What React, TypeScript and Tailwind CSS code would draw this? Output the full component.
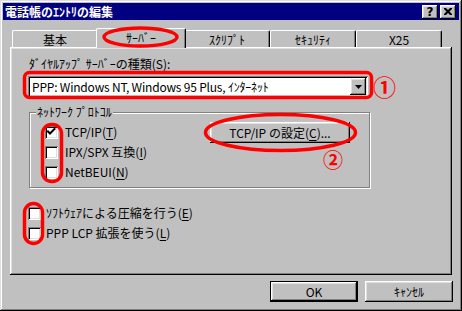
import React from "react";

const raised =
  "shadow-[inset_-1px_-1px_#000,inset_1px_1px_#fff,inset_-2px_-2px_#808080,inset_2px_2px_#dfdfdf]";
const sunken =
  "shadow-[inset_1px_1px_#808080,inset_-1px_-1px_#fff,inset_2px_2px_#000,inset_-2px_-2px_#dfdfdf]";

function Check({ checked }: { checked?: boolean }) {
  return (
    <span className="relative block w-[13px] h-[13px] shrink-0 bg-white shadow-[inset_1px_1px_#808080,inset_-1px_-1px_#fff,inset_2px_2px_#000,inset_-2px_-2px_#dfdfdf]">
      {checked && (
        <svg className="absolute left-0 top-0" width="13" height="13" viewBox="0 0 13 13">
          <path d="M3 5.5 L5 7.5 L9.5 3" fill="none" stroke="#000" strokeWidth="2" strokeLinecap="square" />
        </svg>
      )}
    </span>
  );
}

function CheckRow({
  checked,
  children,
  gap,
}: {
  checked?: boolean;
  children: React.ReactNode;
  gap: string;
}) {
  return (
    <div className={`flex items-center h-[20px] ${gap}`}>
      <Check checked={checked} />
      <span className="whitespace-nowrap">{children}</span>
    </div>
  );
}

function U({ children }: { children: React.ReactNode }) {
  return <span className="underline underline-offset-[2px]">{children}</span>;
}

function Tab({ label, selected }: { label: string; selected?: boolean }) {
  if (selected) {
    return (
      <div className="relative z-10 -mx-[2px] -mb-[1px] w-[90px] h-[20px] bg-[#c0c0c0] border-l border-t border-white border-r border-r-black rounded-tl-[2px] rounded-tr-[2px] shadow-[inset_-1px_0_#808080] flex items-start justify-center pt-[2px]">
        <span>{label}</span>
      </div>
    );
  }
  return (
    <div className="w-[86px] h-[17px] bg-[#c0c0c0] border-l border-t border-white border-r border-r-black rounded-tl-[2px] rounded-tr-[2px] shadow-[inset_-1px_0_#808080] flex items-start justify-center pt-[2px]">
      <span>{label}</span>
    </div>
  );
}

export default function App() {
  return (
    <div className="relative w-[462px] h-[311px] overflow-hidden bg-[#c0c0c0] p-[3px] text-[12px] leading-[14px] text-black font-['Noto_Sans_CJK_JP',sans-serif] shadow-[inset_-1px_-1px_#000,inset_1px_1px_#dfdfdf,inset_-2px_-2px_#808080,inset_2px_2px_#fff]">
      {/* title bar */}
      <div className="h-[17px] w-[456px] bg-[#000080] flex items-center justify-between pl-[2px] pr-[3px]">
        <span className="text-white font-bold whitespace-nowrap">電話帳のｴﾝﾄﾘの編集</span>
        <div className="flex gap-[2px]">
          <div className={`w-[16px] h-[14px] bg-[#c0c0c0] ${raised} flex items-center justify-center font-bold text-[12px] leading-none font-['DejaVu_Sans',sans-serif]`}>
            ?
          </div>
          <div className={`w-[16px] h-[14px] bg-[#c0c0c0] ${raised} flex items-center justify-center`}>
            <svg width="8" height="7" viewBox="0 0 8 7">
              <path d="M0 0h2l2 2 2-2h2v1L5.5 3.5 8 6v1H6L4 5 2 7H0V6l2.5-2.5L0 1z" fill="#000" />
            </svg>
          </div>
        </div>
      </div>

      {/* tabs */}
      <div className="mt-[8px] ml-[9px] flex items-end h-[19px]">
        <Tab label="基本" />
        <Tab label="ｻｰﾊﾞｰ" selected />
        <Tab label="ｽｸﾘﾌﾟﾄ" />
        <Tab label="ｾｷｭﾘﾃｨ" />
        <Tab label="X25" />
      </div>

      {/* panel */}
      <div className={`ml-[7px] w-[442px] h-[228px] ${raised} pt-[10px] pl-[18px]`}>
        <div className="ml-[1px] whitespace-nowrap">ﾀﾞｲﾔﾙｱｯﾌﾟ ｻｰﾊﾞｰの種類(S):</div>
        <div className={`mt-[5px] w-[340px] h-[21px] bg-white ${sunken} flex items-center p-[2px]`}>
          <span className="flex-1 pl-[2px] whitespace-nowrap tracking-[-0.2px]">
            PPP: Windows NT, Windows 95 Plus, ｲﾝﾀｰﾈｯﾄ
          </span>
          <div className={`w-[16px] h-[17px] bg-[#c0c0c0] ${raised} flex items-center justify-center`}>
            <svg width="7" height="4" viewBox="0 0 7 4">
              <path d="M0 0h7L3.5 4z" fill="#000" />
            </svg>
          </div>
        </div>

        {/* group box */}
        <div className="relative mt-[15px] ml-[1px] w-[341px] h-[76px] border border-[#808080] shadow-[1px_1px_#fff,inset_1px_1px_#fff] pt-[9px] pl-[15px] pr-[19px] flex justify-between items-start">
          <span className="absolute left-[6px] -top-[8px] px-[1px] bg-[#c0c0c0] whitespace-nowrap">ﾈｯﾄﾜｰｸ ﾌﾟﾛﾄｺﾙ</span>
          <div className="flex flex-col">
            <CheckRow checked gap="gap-[7px]">
              TCP/IP(<U>T</U>)
            </CheckRow>
            <CheckRow gap="gap-[7px]">
              IPX/SPX 互換(<U>I</U>)
            </CheckRow>
            <CheckRow gap="gap-[7px]">
              NetBEUI(<U>N</U>)
            </CheckRow>
          </div>
          <div className={`w-[140px] h-[21px] ${raised} flex items-center justify-center whitespace-nowrap`}>
            TCP/IP の設定(<U>C</U>)...
          </div>
        </div>

        <div className="mt-[15px] flex flex-col">
          <CheckRow gap="gap-[5px]">
            ｿﾌﾄｳｪｱによる圧縮を行う(<U>E</U>)
          </CheckRow>
          <CheckRow gap="gap-[5px]">
            PPP LCP 拡張を使う(<U>L</U>)
          </CheckRow>
        </div>
      </div>

      {/* buttons */}
      <div className="mt-[6px] flex justify-end gap-[7px] pr-[6px]">
        <div className="w-[88px] h-[21px] border border-black flex">
          <div className={`flex-1 ${raised} flex items-center justify-center`}>OK</div>
        </div>
        <div className={`w-[88px] h-[21px] ${raised} flex items-center justify-center`}>ｷｬﾝｾﾙ</div>
      </div>

      {/* red annotations */}
      <svg className="pointer-events-none absolute left-0 top-0 z-20" width="462" height="311" viewBox="0 0 462 311">
        <g fill="none" stroke="#ff0000" strokeWidth="3.5">
          <ellipse cx="140.5" cy="37" rx="36.5" ry="9" />
          <rect x="24.5" y="72.5" width="347" height="25" rx="5" />
          <rect x="42.5" y="124.5" width="19" height="57" rx="9" />
          <ellipse cx="280.5" cy="132.5" rx="75" ry="18" />
          <rect x="24.5" y="203.5" width="18" height="40" rx="9" />
        </g>
      </svg>
      <span className="absolute z-20 left-[373px] top-[74px] text-[#ff0000] font-bold text-[23px] leading-[24px] font-['Noto_Sans_CJK_JP',sans-serif]">
        ①
      </span>
      <span className="absolute z-20 left-[323px] top-[149px] text-[#ff0000] font-bold text-[20px] leading-[22px] font-['Noto_Sans_CJK_JP',sans-serif]">
        ②
      </span>
    </div>
  );
}
